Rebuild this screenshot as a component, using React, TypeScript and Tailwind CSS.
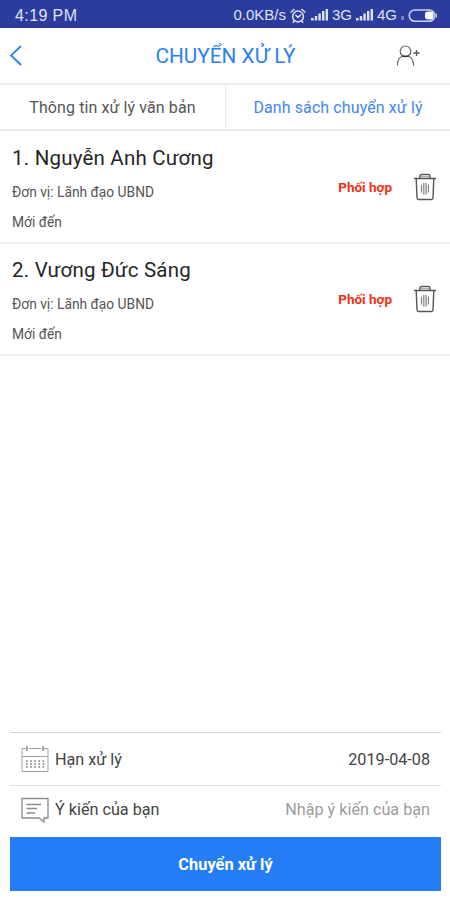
type Person = {
  id: number;
  name: string;
  unit: string;
  status: string;
  role: string;
};

const people: Person[] = [
  { id: 1, name: 'Nguyễn Anh Cương', unit: 'Lãnh đạo UBND', status: 'Mới đến', role: 'Phối hợp' },
  { id: 2, name: 'Vương Đức Sáng', unit: 'Lãnh đạo UBND', status: 'Mới đến', role: 'Phối hợp' },
];

function AlarmIcon() {
  return (
    <svg width="16" height="16" viewBox="0 0 16 16" fill="none" stroke="#dfe2f5" strokeWidth="1.5" strokeLinecap="round">
      <circle cx="8" cy="8.5" r="5.4" />
      <path d="M1.2 4 4 1.5M14.8 4 12 1.5M5.8 7.2 8 9.4l2.6-2.4M4.2 13l-1 1.2M11.8 13l1 1.2" />
    </svg>
  );
}

function SignalIcon() {
  return (
    <svg width="18" height="13" viewBox="0 0 18 13" fill="#dfe2f5">
      <rect x="0" y="9" width="2.6" height="2.5" />
      <rect x="3.8" y="7" width="2.4" height="4.5" />
      <rect x="7.4" y="4.5" width="2.4" height="7" />
      <rect x="11" y="2" width="2.4" height="9.5" />
      <rect x="14.6" y="0" width="2.4" height="11.5" />
    </svg>
  );
}

function BatteryIcon() {
  return (
    <svg width="30" height="14" viewBox="0 0 30 14">
      <rect x="1.2" y="1" width="25.6" height="11.2" rx="5.6" fill="none" stroke="#c9cfec" strokeWidth="1.6" />
      <rect x="17" y="2.6" width="8.4" height="8" rx="3" fill="#fff" />
      <path d="M28.2 4.600v4" stroke="#c9cfec" strokeWidth="1.3" />
    </svg>
  );
}

function AddUserIcon() {
  return (
    <svg width="24" height="22" viewBox="0 0 24 22" fill="none" stroke="#666" strokeWidth="1.2">
      <circle cx="9.5" cy="6.3" r="5.3" />
      <path d="M6.5 11.3c-3 .9-5 4-5.2 9.300M12.500 11.300c3 .9 4.900 4 5.200 9.300" />
      <path d="M6.300 11.300h6.400" stroke="#333" strokeWidth="1.5" />
      <path d="M20.500 5v6M17.500 8h6" stroke="#555" strokeWidth="1.300" />
    </svg>
  );
}

function TrashIcon() {
  return (
    <svg width="24" height="28" viewBox="0 0 24 28" fill="none" stroke="#555" strokeWidth="1.4">
      <path d="M1 5.500h22" strokeWidth="1.500" />
      <path d="M7 5V3.200Q7 1.500 8.800 1.500h6.400Q17 1.500 17 3.200V5" />
      <path d="M8 3.700h8" stroke="#999" strokeWidth="1" />
      <path d="M3.200 5.500 4 25q.1 1.500 1.500 1.500h13q1.400 0 1.500-1.500l.8-19.500" />
      <path d="M8.500 11.500v8M10.800 10v11.500M13.100 10v11.500M15.400 11.500v8" stroke="#888" strokeWidth="1.300" />
    </svg>
  );
}

function CalendarIcon() {
  return (
    <svg width="28" height="28" viewBox="0 0 28 28" fill="none" stroke="#a3a3a3" strokeWidth="1">
      <path d="M6 3.500H1v23h26v-23h-5M8 3.500h12M1 11.500h26" />
      <path d="M6 1v5M22 1v5" stroke="#888" strokeWidth="1.400" />
      <path d="M5 16h19M5 19h19M5 22h19" stroke="#888" strokeWidth="1.400" strokeDasharray="1.800 2.300" />
    </svg>
  );
}

function CommentIcon() {
  return (
    <svg width="28" height="26" viewBox="0 0 28 26" fill="none" stroke="#8c8c8c" strokeWidth="1.300">
      <path d="M1 1.500h26v19.500h-4v4l-5-4H1z" />
      <path d="M5.500 7.500h14.500M5.500 11.500h10.500M5.500 16h8.500" />
    </svg>
  );
}

function PersonRow({ person }: { person: Person }) {
  return (
    <li className="flex h-[112px] items-center justify-between border-b-2 border-[#f0f0f0] pl-3 pr-[13px]">
      <div className="flex h-full flex-col pt-[14px]">
        <h2 className="text-[20.5px] leading-6 tracking-[0.2px] text-[#262626]">
          {person.id}. {person.name}
        </h2>
        <p className="mt-3 text-[13.8px] leading-5 text-[#555]">Đơn vị: {person.unit}</p>
        <p className="mt-[10px] text-[13.8px] leading-5 text-[#555]">{person.status}</p>
      </div>
      <div className="flex items-center gap-[21px]">
        <span className="text-[13.5px] font-bold text-[#ee3214]">{person.role}</span>
        <button aria-label="Xóa">
          <TrashIcon />
        </button>
      </div>
    </li>
  );
}

export default function App() {
  return (
    <div className="flex h-[900px] w-[450px] flex-col bg-white font-[Roboto,'Noto_Sans',sans-serif]">
      {/* Status bar */}
      <div className="flex h-7 items-center justify-between bg-[#2c3c9c] pl-[15px] pr-3 pt-[3px] font-['Liberation_Sans',sans-serif] text-[15px] text-[#dfe2f5]">
        <span className="text-[16px] tracking-[0.4px]">4:19 PM</span>
        <div className="flex items-center">
          <span className="mr-1">0.0KB/s</span>
          <AlarmIcon />
          <span className="ml-[5px] mr-[3px]">
            <SignalIcon />
          </span>
          <span className="mr-1">3G</span>
          <SignalIcon />
          <span className="ml-[3px]">4G</span>
          <span className="mx-1 mt-1 h-1 w-[3px] bg-[#7582c4]" />
          <BatteryIcon />
        </div>
      </div>

      {/* Header */}
      <header className="flex h-[57px] items-center border-b-2 border-[#ebebeb] pl-[9px] pr-[30px]">
        <button aria-label="Quay lại" className="w-[24px]">
          <svg width="14" height="22" viewBox="0 0 14 22" fill="none" stroke="#2b80f5" strokeWidth="1.8">
            <path d="M12 1 2 10.500 12 20" />
          </svg>
        </button>
        <h1 className="flex-1 pl-[22px] pt-0.5 text-center text-[20.8px] text-[#2b80f5]">CHUYỂN XỬ LÝ</h1>
        <button aria-label="Thêm người">
          <AddUserIcon />
        </button>
      </header>

      {/* Tabs */}
      <nav className="flex h-[46px] border-b-2 border-[#ececec] text-[16px] tracking-[0.1px]">
        <button className="w-[226px] border-r border-[#ebebeb] pt-0.5 text-[#555]">Thông tin xử lý văn bản</button>
        <button className="flex-1 pt-0.5 text-[#4485ee]">Danh sách chuyển xử lý</button>
      </nav>

      <ul className="flex-1 pt-px">
        {people.map((person) => (
          <PersonRow key={person.id} person={person} />
        ))}
      </ul>

      {/* Form */}
      <div className="mb-[9px] ml-[10px] mr-[9px]">
        <div className="flex h-[53px] items-center border-t border-[#d4d4d4] px-[11px] text-[16.2px] text-[#444]">
          <CalendarIcon />
          <span className="ml-[6px] flex-1 pt-[3px]">Hạn xử lý</span>
          <span className="pt-[3px]">2019-04-08</span>
        </div>
        <div className="flex h-[52px] items-center border-t border-[#dedede] px-[11px] pb-[3px] text-[16.2px] text-[#444]">
          <CommentIcon />
          <span className="ml-[6px] flex-1">Ý kiến của bạn</span>
          <span className="text-[#9c9c9c]">Nhập ý kiến của bạn</span>
        </div>
        <button className="h-[54px] w-full bg-[#247df5] pt-0.5 text-[16.4px] font-bold text-white">Chuyển xử lý</button>
      </div>
    </div>
  );
}
